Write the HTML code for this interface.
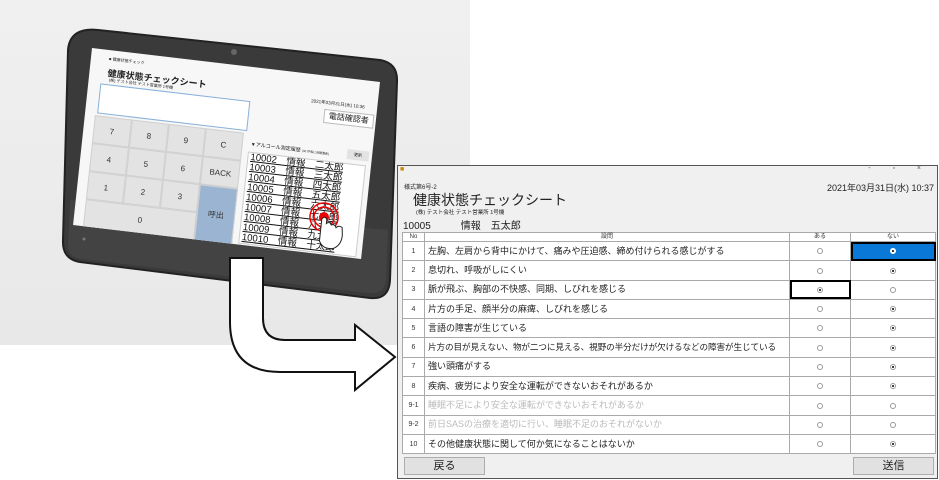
<!DOCTYPE html>
<html><head><meta charset="utf-8"><style>
*{margin:0;padding:0;box-sizing:border-box}
body{width:939px;height:480px;overflow:hidden;background:#fff;position:relative;font-family:"Liberation Sans","Noto Sans CJK JP",sans-serif;color:#222}
.bg{position:absolute;left:0;top:0;width:470px;height:345px;background:linear-gradient(180deg,#f0f0f0,#e8e8e8)}
.scr{position:absolute;left:0;top:0;width:288px;height:177px;background:#f7f7f7;transform-origin:0 0;transform:matrix(1,0.118,-0.107,1,92,48);overflow:hidden;font-size:6px}
.scr .k{position:absolute;background:#e3e3e3;border:1px solid #d0d0d0;display:flex;align-items:center;justify-content:center;font-size:8px;color:#333}
.list{position:absolute;left:165px;top:84px;width:118px;height:92px;background:#fff;border:1px solid #ccc;overflow:hidden}
.list div{font-size:9.5px;line-height:10px;height:10px;text-decoration:underline;white-space:nowrap;color:#111;padding-left:2px}
.win{position:absolute;left:397px;top:165px;width:541px;height:314px;border:1px solid #555;background:#f0f0f0}
table{position:absolute;left:4px;top:66px;width:533px;border-collapse:collapse;background:#fff;font-size:9px;table-layout:fixed}
td{border:1px solid #aaa;height:19.3px;padding:0;white-space:nowrap;overflow:hidden;line-height:17px}
td.n{text-align:center;font-size:7px;color:#333}
td.q{padding-left:3px}
td.r,td.r2{text-align:center}
th{height:9px;font-size:6px;font-weight:normal;border:1px solid #aaa;color:#333;line-height:8px}
.o{display:inline-block;width:6px;height:6px;border:1px solid #999;border-radius:50%;vertical-align:middle;position:relative}
.o.on::after{content:"";position:absolute;left:1px;top:1px;width:2px;height:2px;border-radius:50%;background:#000}
.g{color:#bbb}
.btn{position:absolute;top:291px;height:18px;background:#e1e1e1;border:1px solid #adadad;font-size:11px;text-align:center;line-height:16px}
</style></head><body>
<div class="bg"></div>
<svg style="position:absolute;left:0;top:0" width="470" height="345">
<path d="M98,30 L380,60 Q398,63 397,82 L390,280 Q389,300 370,298 L80,262 Q62,259 63,240 L68,50 Q70,27 98,30 Z" fill="#3a3a3a" stroke="#222" stroke-width="2"/>
<path d="M70,200 L68,245 Q68,258 82,259 L368,293 Q384,295 386,280 L388,230 Z" fill="#4a4a4a" opacity=".6"/>
<circle cx="234" cy="52" r="3" fill="#666"/>
<circle cx="84" cy="239" r="1.5" fill="#777"/>
</svg>
<div class="scr">
<div style="position:absolute;left:18px;top:6px;font-size:4px">■ 健康状態チェック</div>
<div style="position:absolute;left:18px;top:16px;font-size:9px;font-weight:bold">健康状態チェックシート</div>
<div style="position:absolute;left:20px;top:27px;font-size:4px">(株) テスト会社 テスト営業所 1号機</div>
<div style="position:absolute;left:222px;top:24px;font-size:4.5px">2021年03月31日(水) 10:36</div>
<div style="position:absolute;left:236px;top:33px;width:50px;height:14px;background:#fff;border:1px solid #bbb;font-size:8px;text-align:center;line-height:12px">電話確認者</div>
<div style="position:absolute;left:12px;top:34px;width:150px;height:30px;background:#fff;border:1px solid #88b0d8"></div>
<div class="k" style="left:10px;top:66px;width:37px;height:28px">7</div>
<div class="k" style="left:47px;top:66px;width:37px;height:28px">8</div>
<div class="k" style="left:84px;top:66px;width:37px;height:28px">9</div>
<div class="k" style="left:121px;top:66px;width:38px;height:28px">C</div>
<div class="k" style="left:10px;top:94px;width:37px;height:28px">4</div>
<div class="k" style="left:47px;top:94px;width:37px;height:28px">5</div>
<div class="k" style="left:84px;top:94px;width:37px;height:28px">6</div>
<div class="k" style="left:121px;top:94px;width:38px;height:28px">BACK</div>
<div class="k" style="left:10px;top:122px;width:37px;height:28px">1</div>
<div class="k" style="left:47px;top:122px;width:37px;height:28px">2</div>
<div class="k" style="left:84px;top:122px;width:37px;height:28px">3</div>
<div class="k" style="left:10px;top:150px;width:111px;height:28px">0</div>
<div class="k" style="left:121px;top:122px;width:38px;height:56px;background:#9ab4d2">呼出</div>
<div style="position:absolute;left:167px;top:73px;font-size:5px">▼アルコール測定履歴 <span style="font-size:3px">(30 件毎に自動更新)</span></div>
<div style="position:absolute;left:263px;top:70px;width:22px;height:10px;background:#e3e3e3;font-size:4px;text-align:center;line-height:10px">更新</div>
<div class="list">
<div>10002　情報　二太郎</div><div>10003　情報　三太郎</div><div>10004　情報　四太郎</div><div>10005　情報　五太郎</div><div>10006　情報　六太郎</div><div>10007　情報　七太郎</div><div>10008　情報　八太郎</div><div>10009　情報　九太郎</div><div>10010　情報　十太郎</div>
</div>
<svg style="position:absolute;left:225px;top:120px" width="60" height="57">
<circle cx="22" cy="20" r="14" fill="none" stroke="#e00" stroke-width="1.5"/>
<circle cx="22" cy="20" r="10" fill="none" stroke="#e00" stroke-width="1.5"/>
<circle cx="22" cy="20" r="5" fill="#e00"/>
<path d="M20,22 L20,44 Q24,52 34,50 Q42,46 42,36 L41,28 Q37,26 35,29 Q33,25 30,27 Q28,23 25,26 L25,22 Q23,18 20,22 Z" fill="#fff" stroke="#222" stroke-width="1"/>
</svg>
</div>
<svg style="position:absolute;left:0;top:0" width="420" height="400">
<path d="M230,258 L263,258 L263,318 Q263,340 285,340 L355,340 L355,325 L395,357 L355,390 L355,372 L280,372 Q230,372 230,322 Z" fill="#fff" stroke="#111" stroke-width="2"/>
</svg>
<div class="win">
<div style="position:absolute;left:2px;top:0;font-size:7px;color:#c80">■</div>
<div style="position:absolute;right:6px;top:-1px;font-size:7px;color:#555;letter-spacing:10px">- ▫ ×</div>
<div style="position:absolute;left:6px;top:16px;font-size:6px">様式第6号-2</div>
<div style="position:absolute;right:3px;top:15px;font-size:9px">2021年03月31日(水) 10:37</div>
<div style="position:absolute;left:15px;top:24px;font-size:14px">健康状態チェックシート</div>
<div style="position:absolute;left:18px;top:42px;font-size:5.5px">(株) テスト会社 テスト営業所 1号機</div>
<div style="position:absolute;left:5px;top:51px;font-size:10px">10005　　　情報　五太郎</div>
<table>
<colgroup><col style="width:22px"><col style="width:365px"><col style="width:61px"><col style="width:85px"></colgroup>
<tr><th>No</th><th>設問</th><th>ある</th><th>ない</th></tr>
<tr><td class="n">1</td><td class="q">左胸、左肩から背中にかけて、痛みや圧迫感、締め付けられる感じがする</td><td class="r"><span class="o"></span></td><td class="r2" style="background:#0a78d7;outline:2px solid #000;outline-offset:-2px"><span class="o on" style="background:#fff;border-color:#fff"></span></td></tr>
<tr><td class="n">2</td><td class="q">息切れ、呼吸がしにくい</td><td class="r"><span class="o"></span></td><td class="r2"><span class="o on"></span></td></tr>
<tr><td class="n">3</td><td class="q">脈が飛ぶ、胸部の不快感、同期、しびれを感じる</td><td class="r" style="outline:2px solid #000;outline-offset:-2px"><span class="o on"></span></td><td class="r2"><span class="o"></span></td></tr>
<tr><td class="n">4</td><td class="q">片方の手足、顔半分の麻痺、しびれを感じる</td><td class="r"><span class="o"></span></td><td class="r2"><span class="o on"></span></td></tr>
<tr><td class="n">5</td><td class="q">言語の障害が生じている</td><td class="r"><span class="o"></span></td><td class="r2"><span class="o on"></span></td></tr>
<tr><td class="n">6</td><td class="q" style="font-size:8.6px;letter-spacing:-0.1px">片方の目が見えない、物が二つに見える、視野の半分だけが欠けるなどの障害が生じている</td><td class="r"><span class="o"></span></td><td class="r2"><span class="o on"></span></td></tr>
<tr><td class="n">7</td><td class="q">強い頭痛がする</td><td class="r"><span class="o"></span></td><td class="r2"><span class="o on"></span></td></tr>
<tr><td class="n">8</td><td class="q">疾病、疲労により安全な運転ができないおそれがあるか</td><td class="r"><span class="o"></span></td><td class="r2"><span class="o on"></span></td></tr>
<tr><td class="n g">9-1</td><td class="q g">睡眠不足により安全な運転ができないおそれがあるか</td><td class="r"><span class="o"></span></td><td class="r2"><span class="o"></span></td></tr>
<tr><td class="n g">9-2</td><td class="q g">前日SASの治療を適切に行い、睡眠不足のおそれがないか</td><td class="r"><span class="o"></span></td><td class="r2"><span class="o"></span></td></tr>
<tr><td class="n">10</td><td class="q">その他健康状態に関して何か気になることはないか</td><td class="r"><span class="o"></span></td><td class="r2"><span class="o on"></span></td></tr>
</table>
<div class="btn" style="left:6px;width:81px">戻る</div>
<div class="btn" style="left:455px;width:81px">送信</div>
</div>
</body></html>
